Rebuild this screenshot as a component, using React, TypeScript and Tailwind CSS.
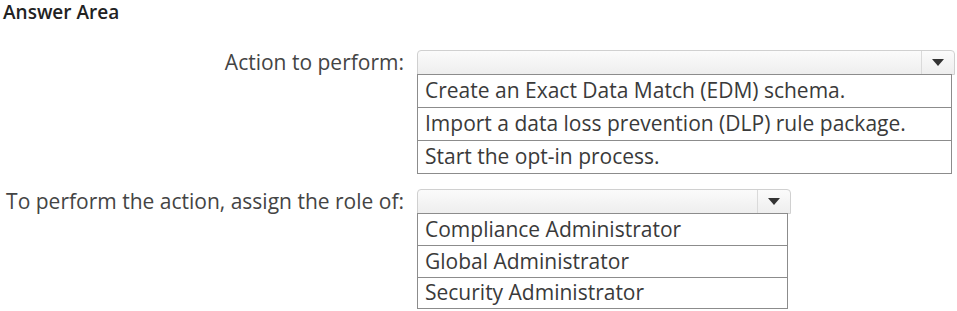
import React from "react";

const font = { fontFamily: '"Segoe UI", "Open Sans", "Noto Sans", sans-serif' };

function Arrow() {
  return (
    <svg width="12" height="7" viewBox="0 0 12 7">
      <polygon points="0,0 12,0 6,7" fill="#333" />
    </svg>
  );
}

function Dropdown({
  width,
  rowH,
  lastH,
  options,
}: {
  width: string;
  rowH: string;
  lastH: string;
  options: string[];
}) {
  return (
    <div className={`flex flex-col ${width}`}>
      <div className="flex h-[25px] rounded-t-[4px] border border-[#d0d0d0] bg-gradient-to-b from-[#fbfbfb] to-[#eeeeee]">
        <div className="flex-1" />
        <div className="flex w-[33px] items-center justify-center border-l border-[#dadada]">
          <Arrow />
        </div>
      </div>
      <div className="-mt-px mr-[3px] border border-[#8c8c8c] bg-white">
        {options.map((o, i) => {
          const last = i === options.length - 1;
          return (
            <div
              key={o}
              className={`flex ${last ? lastH : rowH} items-center whitespace-nowrap pl-[7px] text-[21px] text-[#3a3a3a] ${last ? "" : "border-b border-[#8c8c8c]"}`}
            >
              {o}
            </div>
          );
        })}
      </div>
    </div>
  );
}

export default function App() {
  return (
    <div className="h-[311px] w-[957px] overflow-hidden bg-white text-[#444]" style={font}>
      <div className="pl-[3px] pt-[1px] text-[19px] font-semibold leading-[22px] text-[#222]">Answer Area</div>
      <div className="mt-[27px] flex">
        <div className="flex h-[25px] w-[404px] items-center justify-end whitespace-nowrap text-[21px]">Action to perform:</div>
        <div className="ml-[13px]">
          <Dropdown
            width="w-[538px]"
            rowH="h-[33px]"
            lastH="h-[32px]"
            options={[
              "Create an Exact Data Match (EDM) schema.",
              "Import a data loss prevention (DLP) rule package.",
              "Start the opt-in process.",
            ]}
          />
        </div>
      </div>
      <div className="mt-[15px] flex">
        <div className="flex h-[25px] w-[404px] items-center justify-end whitespace-nowrap text-[21px]">
          To perform the action, assign the role of:
        </div>
        <div className="ml-[13px]">
          <Dropdown
            width="w-[374px]"
            rowH="h-[32px]"
            lastH="h-[30px]"
            options={["Compliance Administrator", "Global Administrator", "Security Administrator"]}
          />
        </div>
      </div>
    </div>
  );
}
